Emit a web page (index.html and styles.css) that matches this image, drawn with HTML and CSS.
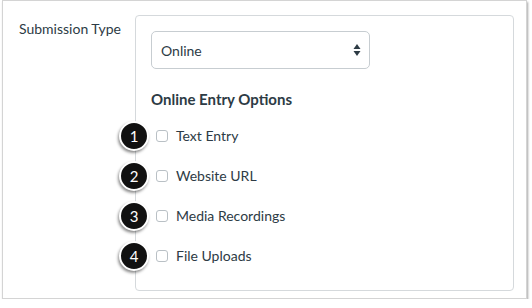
FILE: index.html
```html
<!DOCTYPE html>
<html lang="en">

<head>
    <meta charset="UTF-8">
    <title>Submission Type</title>
    <link rel="stylesheet" href="styles.css">
</head>

<body>

    <div class="frame">
        <div class="field-label">Submission Type</div>

        <div class="field-box">
            <div class="select">
                <span>Online</span>
                <svg class="select-arrows" width="8" height="14" viewBox="0 0 8 14">
                    <path d="M4 1 L7.5 6 L0.5 6 Z" fill="#2d3b45" />
                    <path d="M0.5 8 L7.5 8 L4 13 Z" fill="#2d3b45" />
                </svg>
            </div>

            <div class="options-title">Online Entry Options</div>

            <!-- entry option rows, each with its callout badge -->
            <div class="option">
                <span class="badge">1</span>
                <span class="checkbox"></span>
                <span class="option-text">Text Entry</span>
            </div>
            <div class="option">
                <span class="badge">2</span>
                <span class="checkbox"></span>
                <span class="option-text">Website URL</span>
            </div>
            <div class="option">
                <span class="badge">3</span>
                <span class="checkbox"></span>
                <span class="option-text">Media Recordings</span>
            </div>
            <div class="option">
                <span class="badge">4</span>
                <span class="checkbox"></span>
                <span class="option-text">File Uploads</span>
            </div>
        </div>
    </div>

</body>

</html>
```

FILE: styles.css
```css
body {
    margin: 0;
    background-color: #fff;
    font-family: Lato, "Open Sans", sans-serif;
    color: #2d3b45;
}

.frame {
    box-sizing: border-box;
    margin-left: 2px;
    width: 525px;
    height: 299px;
    padding-top: 14px;
    border: 1px solid #d4d4d4;
    box-shadow: 1px 2px 2px rgba(0, 0, 0, 0.35);
    display: flex;
}

.field-label {
    width: 116px;
    padding-left: 16px;
    margin-top: 4px;
    font-size: 14px;
    line-height: 20px;
}

.field-box {
    box-sizing: border-box;
    width: 379px;
    height: 276px;
    padding: 15px 15px 14px;
    border: 1px solid #d5d9dc;
    border-radius: 4px;
}

.select {
    box-sizing: border-box;
    width: 219px;
    height: 38px;
    padding: 0 8px 0 9px;
    border: 1px solid #c7cdd1;
    border-radius: 5px;
    display: flex;
    align-items: center;
    justify-content: space-between;
    font-size: 14px;
}

.options-title {
    margin-top: 20px;
    margin-bottom: 7px;
    font-size: 15px;
    font-weight: bold;
    line-height: 20px;
}

.option {
    position: relative;
    height: 40px;
    display: flex;
    align-items: center;
    font-size: 14px;
    line-height: 20px;
}

.checkbox {
    box-sizing: border-box;
    width: 12px;
    height: 12px;
    margin-left: 5px;
    margin-right: 8px;
    border: 1px solid #b9c0c5;
    border-radius: 3px;
    background-color: #fff;
}

.option-text {
    margin-top: -1px;
}

/* black callout circles over the left edge of the box */
.badge {
    position: absolute;
    left: -32px;
    top: 5px;
    box-sizing: border-box;
    width: 30px;
    height: 30px;
    border: 2px solid #fff;
    border-radius: 50%;
    background-color: #111;
    color: #fff;
    font-size: 15px;
    line-height: 26px;
    text-align: center;
    box-shadow: -1px 2px 3px rgba(0, 0, 0, 0.45);
}
```
